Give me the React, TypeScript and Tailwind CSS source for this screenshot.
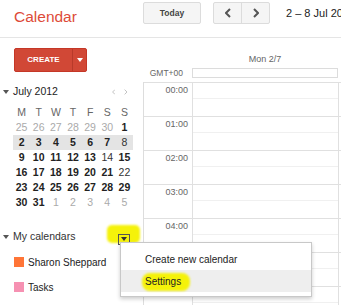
const weeks: { d: number; muted?: boolean; light?: boolean }[][] = [
  [{ d: 25, muted: true }, { d: 26, muted: true }, { d: 27, muted: true }, { d: 28, muted: true }, { d: 29, muted: true }, { d: 30, muted: true }, { d: 1 }],
  [{ d: 2 }, { d: 3 }, { d: 4 }, { d: 5 }, { d: 6 }, { d: 7 }, { d: 8, light: true }],
  [{ d: 9 }, { d: 10 }, { d: 11 }, { d: 12 }, { d: 13 }, { d: 14, light: true }, { d: 15 }],
  [{ d: 16 }, { d: 17 }, { d: 18 }, { d: 19 }, { d: 20 }, { d: 21 }, { d: 22, light: true }],
  [{ d: 23 }, { d: 24 }, { d: 25 }, { d: 26 }, { d: 27 }, { d: 28 }, { d: 29 }],
  [{ d: 30 }, { d: 31 }, { d: 1, muted: true }, { d: 2, muted: true }, { d: 3, muted: true }, { d: 4, muted: true }, { d: 5, muted: true }],
];

const hours = ["00:00", "01:00", "02:00", "03:00", "04:00", "05:00", "06:00"];

const Caret = ({ color = "#555" }: { color?: string }) => (
  <svg width="6" height="4" viewBox="0 0 6 4">
    <path d="M0 0 L6 0 L3 4 Z" fill={color} />
  </svg>
);

const Chevron = ({ left, size = 10, color = "#555", w = 2 }: { left?: boolean; size?: number; color?: string; w?: number }) => (
  <svg width={size * 0.6} height={size} viewBox="0 0 6 10">
    <path d={left ? "M5 1 L1 5 L5 9" : "M1 1 L5 5 L1 9"} fill="none" stroke={color} strokeWidth={w} />
  </svg>
);

const Header = () => (
  <div className="flex h-[38px] overflow-hidden border-b border-[#e5e5e5]">
    <div className="w-[143px] shrink-0 pl-[14px] pt-[8px] text-[15.5px] leading-[18px] text-[#dd4b39]">Calendar</div>
    <div className="mt-[2px] flex h-[22px] w-[58px] shrink-0 items-center justify-center rounded-[2px] border border-[#dcdcdc] bg-[#f5f5f5] text-[8.5px] font-bold text-[#444]">
      Today
    </div>
    <div className="ml-[12px] mt-[2px] flex h-[22px] shrink-0 rounded-[2px] border border-[#dcdcdc] bg-[#f5f5f5]">
      <div className="flex w-[28px] items-center justify-center border-r border-[#dcdcdc]">
        <Chevron left />
      </div>
      <div className="flex w-[27px] items-center justify-center">
        <Chevron />
      </div>
    </div>
    <div className="ml-[16px] mt-[2px] flex h-[22px] shrink-0 items-center whitespace-nowrap text-[11px] text-[#222]">2 – 8 Jul 2012</div>
  </div>
);

const Sidebar = () => (
  <div className="w-[143px] shrink-0 pt-[10px]">
    <div className="ml-[14px] flex h-[24px] w-[73px] rounded-[2px] border border-[#c53727] bg-[#d14836] text-white">
      <div className="flex w-[57px] items-center justify-center text-[8px] font-bold">CREATE</div>
      <div className="flex flex-1 items-center justify-center border-l border-[#b83a2a]">
        <Caret color="#fff" />
      </div>
    </div>

    <div className="mt-[12px] flex h-[16px] items-center pl-[3px] text-[10.5px] text-[#222]">
      <Caret />
      <span className="ml-[4px]">July 2012</span>
      <div className="ml-auto mr-[15px] flex items-center gap-[9px]">
        <Chevron left size={6} color="#aaa" w={1.2} />
        <Chevron size={6} color="#aaa" w={1.2} />
      </div>
    </div>

    <div className="ml-[13px] mt-[5px] w-[120px] text-[10.5px]">
      <div className="grid h-[15px] grid-cols-7 items-center text-center text-[#666]">
        {["M", "T", "W", "T", "F", "S", "S"].map((d, i) => (
          <span key={i}>{d}</span>
        ))}
      </div>
      {weeks.map((w, i) => (
        <div key={i} className={`grid h-[15px] grid-cols-7 items-center text-center ${i === 1 ? "bg-[#e4e4e4]" : ""}`}>
          {w.map((c, j) => (
            <span
              key={j}
              className={c.muted ? "text-[#aaa]" : c.light ? "text-[#333]" : "font-bold text-[#222]"}
            >
              {c.d}
            </span>
          ))}
        </div>
      ))}
    </div>

    <div className="relative mt-[19px] flex h-[16px] items-center pl-[3px] text-[10.5px] text-[#333]">
      <div className="absolute left-[107px] top-[-4px] h-[18px] w-[33px] rounded-[5px] bg-[#f5f20a] blur-[1px]" />
      <Caret />
      <span className="ml-[4px]">My calendars</span>
      <div className="relative ml-auto mr-[13px] mt-[4px] flex h-[11px] w-[12px] items-center justify-center border border-[#555]">
        <Caret color="#333" />
      </div>
    </div>

    {[
      { name: "Sharon Sheppard", color: "bg-[#ff7537]" },
      { name: "Tasks", color: "bg-[#f691b2]" },
    ].map((c) => (
      <div key={c.name} className="mt-[9px] flex h-[16px] items-center pl-[14px] text-[10px] text-[#222]">
        <div className={`h-[10px] w-[10px] ${c.color}`} />
        <span className="ml-[4px]">{c.name}</span>
      </div>
    ))}
  </div>
);

const DayView = () => (
  <div className="flex-1">
    <div className="h-[44px]">
      <div className="ml-[49px] w-[146px] pt-[15px] text-center text-[9px] leading-[12px] text-[#666]">Mon 2/7</div>
      <div className="mt-[3px] flex items-center">
        <div className="w-[49px] pr-[9px] text-right text-[8.5px] leading-[10px] text-[#666]">GMT+00</div>
        <div className="h-[10px] w-[146px] border border-[#dcdcdc]" />
      </div>
    </div>
    <div className="border-l border-[#ddd]">
      {hours.map((h) => (
        <div key={h} className="flex h-[34px] border-t border-[#e0e0e0]">
          <div className="w-[49px] border-r border-[#e0e0e0] pr-[4px] pt-[2px] text-right text-[9px] leading-[10px] text-[#666]">{h}</div>
          <div className="w-[146px] border-r border-[#e0e0e0]">
            <div className="h-[16px] border-b border-[#f0f0f0]" />
          </div>
        </div>
      ))}
    </div>
  </div>
);

const Menu = () => (
  <div className="absolute left-[120px] top-[242px] h-[55px] w-[192px] border border-[#c8c8c8] bg-white py-[5px] text-[10px] text-[#222] shadow-[0_2px_4px_rgba(0,0,0,0.2)]">
    <div className="flex h-[22px] items-center pl-[24px]">Create new calendar</div>
    <div className="relative flex h-[22px] items-center bg-[#eeeeee] pl-[24px]">
      <div className="absolute left-[21px] top-[3px] h-[18px] w-[48px] rounded-[8px] bg-[#f5f20a] blur-[1px]" />
      <span className="relative">Settings</span>
    </div>
  </div>
);

export default function App() {
  return (
    <div className="relative h-[305px] w-[341px] overflow-hidden bg-white font-['Liberation_Sans',Arial,sans-serif]">
      <Header />
      <div className="flex">
        <Sidebar />
        <DayView />
      </div>
      <Menu />
    </div>
  );
}
